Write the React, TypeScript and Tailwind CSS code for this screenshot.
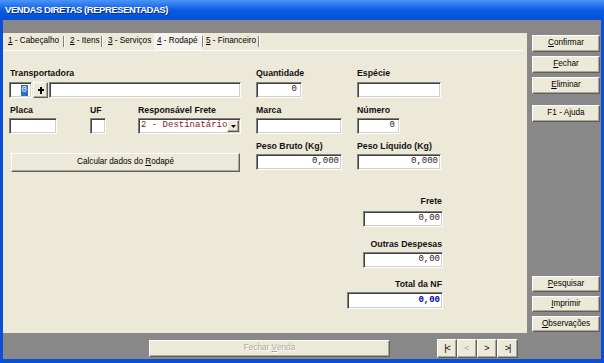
import React from "react";

const sunken =
  "bg-white border border-t-[#808080] border-l-[#808080] border-b-white border-r-white shadow-[inset_1px_1px_0_#404040,inset_-1px_-1px_0_#d4d0c8]";
const raised =
  "bg-[#ece9d8] border border-t-white border-l-white border-b-[#5f5f5f] border-r-[#5f5f5f] shadow-[inset_-1px_-1px_0_#aca899]";

function Label({ children, className = "" }: { children: React.ReactNode; className?: string }) {
  return (
    <div className={"h-[10px] leading-[10px] text-[8.75px] font-bold text-[#111] whitespace-nowrap " + className}>
      {children}
    </div>
  );
}

function U({ children }: { children: React.ReactNode }) {
  return <span className="underline underline-offset-[1px]">{children}</span>;
}

function Num({
  children,
  className = "",
  color = "text-[#222]",
}: {
  children?: React.ReactNode;
  className?: string;
  color?: string;
}) {
  return (
    <div className={sunken + " flex items-center justify-end pr-[2px] font-['Liberation_Mono',monospace] text-[9px] " + color + " " + className}>
      {children}
    </div>
  );
}

function SideBtn({ children, className = "" }: { children: React.ReactNode; className?: string }) {
  return (
    <div className={raised + " w-[68px] flex items-center justify-center text-[8.2px] text-black " + className}>
      {children}
    </div>
  );
}

function Sep() {
  return <div className="w-[2px] h-[11px] border-l border-l-[#808080] border-r border-r-white" />;
}

export default function App() {
  return (
    <div className="w-[604px] h-[363px] flex flex-col bg-[#0a4fd6] overflow-hidden font-['Liberation_Sans',Arial,sans-serif]">
      {/* title bar */}
      <div className="h-[20px] shrink-0 bg-gradient-to-b from-[#4a95f8] via-[#0b5be2] to-[#0350d8] flex items-center pl-[5px]">
        <span className="text-white font-bold text-[9.5px] tracking-[-0.45px] [text-shadow:1px_1px_0_#0a2f8a]">
          VENDAS DIRETAS (REPRESENTADAS)
        </span>
      </div>

      <div className="flex-1 flex flex-col mx-[3px] mb-[4px] bg-[#888888]">
        <div className="h-[13px] shrink-0" />
        <div className="h-[300px] shrink-0 flex">
          {/* main panel */}
          <div className="w-[524px] bg-[#ece9d8] flex flex-col">
            {/* tabs */}
            <div className="h-[17px] flex items-center text-[8.2px] text-black">
              <div className="w-[60px] h-full flex items-center pl-[5px]"><U>1</U>&nbsp;- Cabeçalho</div>
              <Sep />
              <div className="w-[36px] h-full flex items-center pl-[5px]"><U>2</U>&nbsp;- Itens</div>
              <Sep />
              <div className="w-[51px] h-full flex items-center pl-[5px]"><U>3</U>&nbsp;- Serviços</div>
              <div className="w-[48px] h-full flex items-center pl-[3px] bg-[#f4f3ee]"><U>4</U>&nbsp;- Rodapé</div>
              <Sep />
              <div className="w-[54px] h-full flex items-center pl-[2px]"><U>5</U>&nbsp;- Financeiro</div>
              <Sep />
            </div>
            <div className="h-px bg-white mr-[4px]" />

            {/* content */}
            <div className="flex flex-col pl-[6px]">
              <div className="flex items-start">
                {/* left column */}
                <div className="flex flex-col mt-[17px] w-[232px]">
                  <Label className="pl-[1px]">Transportadora</Label>
                  <div className="flex mt-[4px] h-[16px] gap-[1px]">
                    <div className={sunken + " w-[23px] flex items-center justify-end pr-[3px] font-['Liberation_Mono',monospace] text-[9px]"}>
                      <span className="bg-[#316ac5] text-white px-[1px] leading-[11px]">0</span>
                    </div>
                    <div className={raised + " w-[15px] flex items-center justify-center"}>
                      <svg width="6" height="7" viewBox="0 0 6 7">
                        <rect x="0" y="2" width="6" height="2" fill="#000" />
                        <rect x="2" y="0" width="2" height="7" fill="#000" />
                      </svg>
                    </div>
                    <div className={sunken + " w-[192px]"} />
                  </div>
                  <div className="flex mt-[7px]">
                    <div className="flex flex-col w-[48px]">
                      <Label className="pl-[1px]">Placa</Label>
                      <div className={sunken + " mt-[3px] h-[16px]"} />
                    </div>
                    <div className="flex flex-col w-[16px] ml-[33px]">
                      <Label>UF</Label>
                      <div className={sunken + " mt-[3px] h-[16px]"} />
                    </div>
                    <div className="flex flex-col w-[103px] ml-[32px]">
                      <Label>Responsável Frete</Label>
                      <div className={sunken + " mt-[3px] h-[16px] flex items-center pl-[2px]"}>
                        <span className="flex-1 font-['Liberation_Mono',monospace] text-[9px] text-[#7b1c1c] whitespace-nowrap">
                          2 - Destinatário
                        </span>
                        <div className={raised + " w-[13px] h-[12px] mr-[1px] flex items-center justify-center"}>
                          <svg width="5" height="3" viewBox="0 0 5 3">
                            <polygon points="0,0 5,0 2.5,3" fill="#000" />
                          </svg>
                        </div>
                      </div>
                    </div>
                  </div>
                  <div className={raised + " mt-[19px] ml-[2px] w-[229px] h-[19px] flex items-center justify-center text-[8.2px] text-black"}>
                    Calcular dados do&nbsp;<U>R</U>odapé
                  </div>
                </div>

                {/* middle column */}
                <div className="flex flex-col mt-[17px] ml-[15px] w-[86px]">
                  <Label>Quantidade</Label>
                  <Num className="mt-[4px] w-[46px] h-[16px] pr-[4px]">0</Num>
                  <Label className="mt-[7px]">Marca</Label>
                  <Num className="mt-[3px] w-full h-[16px]" />
                  <Label className="mt-[7px]">Peso Bruto (Kg)</Label>
                  <Num className="mt-[3px] w-full h-[16px]">0,000</Num>
                </div>

                {/* right column */}
                <div className="flex flex-col mt-[17px] ml-[15px] w-[84px]">
                  <Label>Espécie</Label>
                  <Num className="mt-[4px] w-full h-[16px]" />
                  <Label className="mt-[7px]">Número</Label>
                  <Num className="mt-[3px] w-[43px] h-[16px] pr-[4px]">0</Num>
                  <Label className="mt-[7px]">Peso Líquido (Kg)</Label>
                  <Num className="mt-[3px] w-full h-[16px]">0,000</Num>
                </div>
              </div>

              {/* totals */}
              <div className="w-[434px] flex flex-col items-end mt-[24px]">
                <Label className="pr-[1px]">Frete</Label>
                <Num className="mt-[5px] w-[80px] h-[16px]">0,00</Num>
                <Label className="mt-[12px] pr-[1px]">Outras Despesas</Label>
                <Num className="mt-[3px] w-[80px] h-[16px]">0,00</Num>
                <Label className="mt-[11px] pr-[1px]">Total da NF</Label>
                <Num className="mt-[3px] w-[96px] h-[17px] font-bold" color="text-[#0000b0]">0,00</Num>
              </div>
            </div>
          </div>

          {/* right buttons */}
          <div className="flex-1 flex flex-col pl-[5px] pt-[2px] pb-[1px]">
            <SideBtn className="h-[17px]"><U>C</U>onfirmar</SideBtn>
            <SideBtn className="h-[17px] mt-[4px]"><U>F</U>echar</SideBtn>
            <SideBtn className="h-[17px] mt-[4px]"><U>E</U>liminar</SideBtn>
            <SideBtn className="h-[17px] mt-[11px]">F1 - Ajuda</SideBtn>
            <div className="mt-auto flex flex-col gap-[4px]">
              <SideBtn className="h-[16px]"><U>P</U>esquisar</SideBtn>
              <SideBtn className="h-[16px]"><U>I</U>mprimir</SideBtn>
              <SideBtn className="h-[16px]"><U>O</U>bservações</SideBtn>
            </div>
          </div>
        </div>

        {/* bottom bar */}
        <div className="flex-1 flex items-start pt-[6px] pl-[146px]">
          <div className={raised + " mt-[1px] w-[241px] h-[17px] flex items-center justify-center text-[8.2px] text-[#aca899] [text-shadow:1px_1px_0_#fff]"}>
            Fechar&nbsp;<U>V</U>enda
          </div>
          <div className="flex ml-[47px]">
            <div className={raised + " w-[20px] h-[19px] flex items-center justify-center text-[9px] text-black tracking-[-1px]"}>|&lt;</div>
            <div className={raised + " w-[20px] h-[19px] flex items-center justify-center text-[9px] text-[#b0ad9f]"}>&lt;</div>
            <div className={raised + " w-[20px] h-[19px] flex items-center justify-center text-[9px] text-black"}>&gt;</div>
            <div className={raised + " w-[21px] h-[19px] flex items-center justify-center text-[9px] text-black tracking-[-1px]"}>&gt;|</div>
          </div>
        </div>
      </div>
    </div>
  );
}
